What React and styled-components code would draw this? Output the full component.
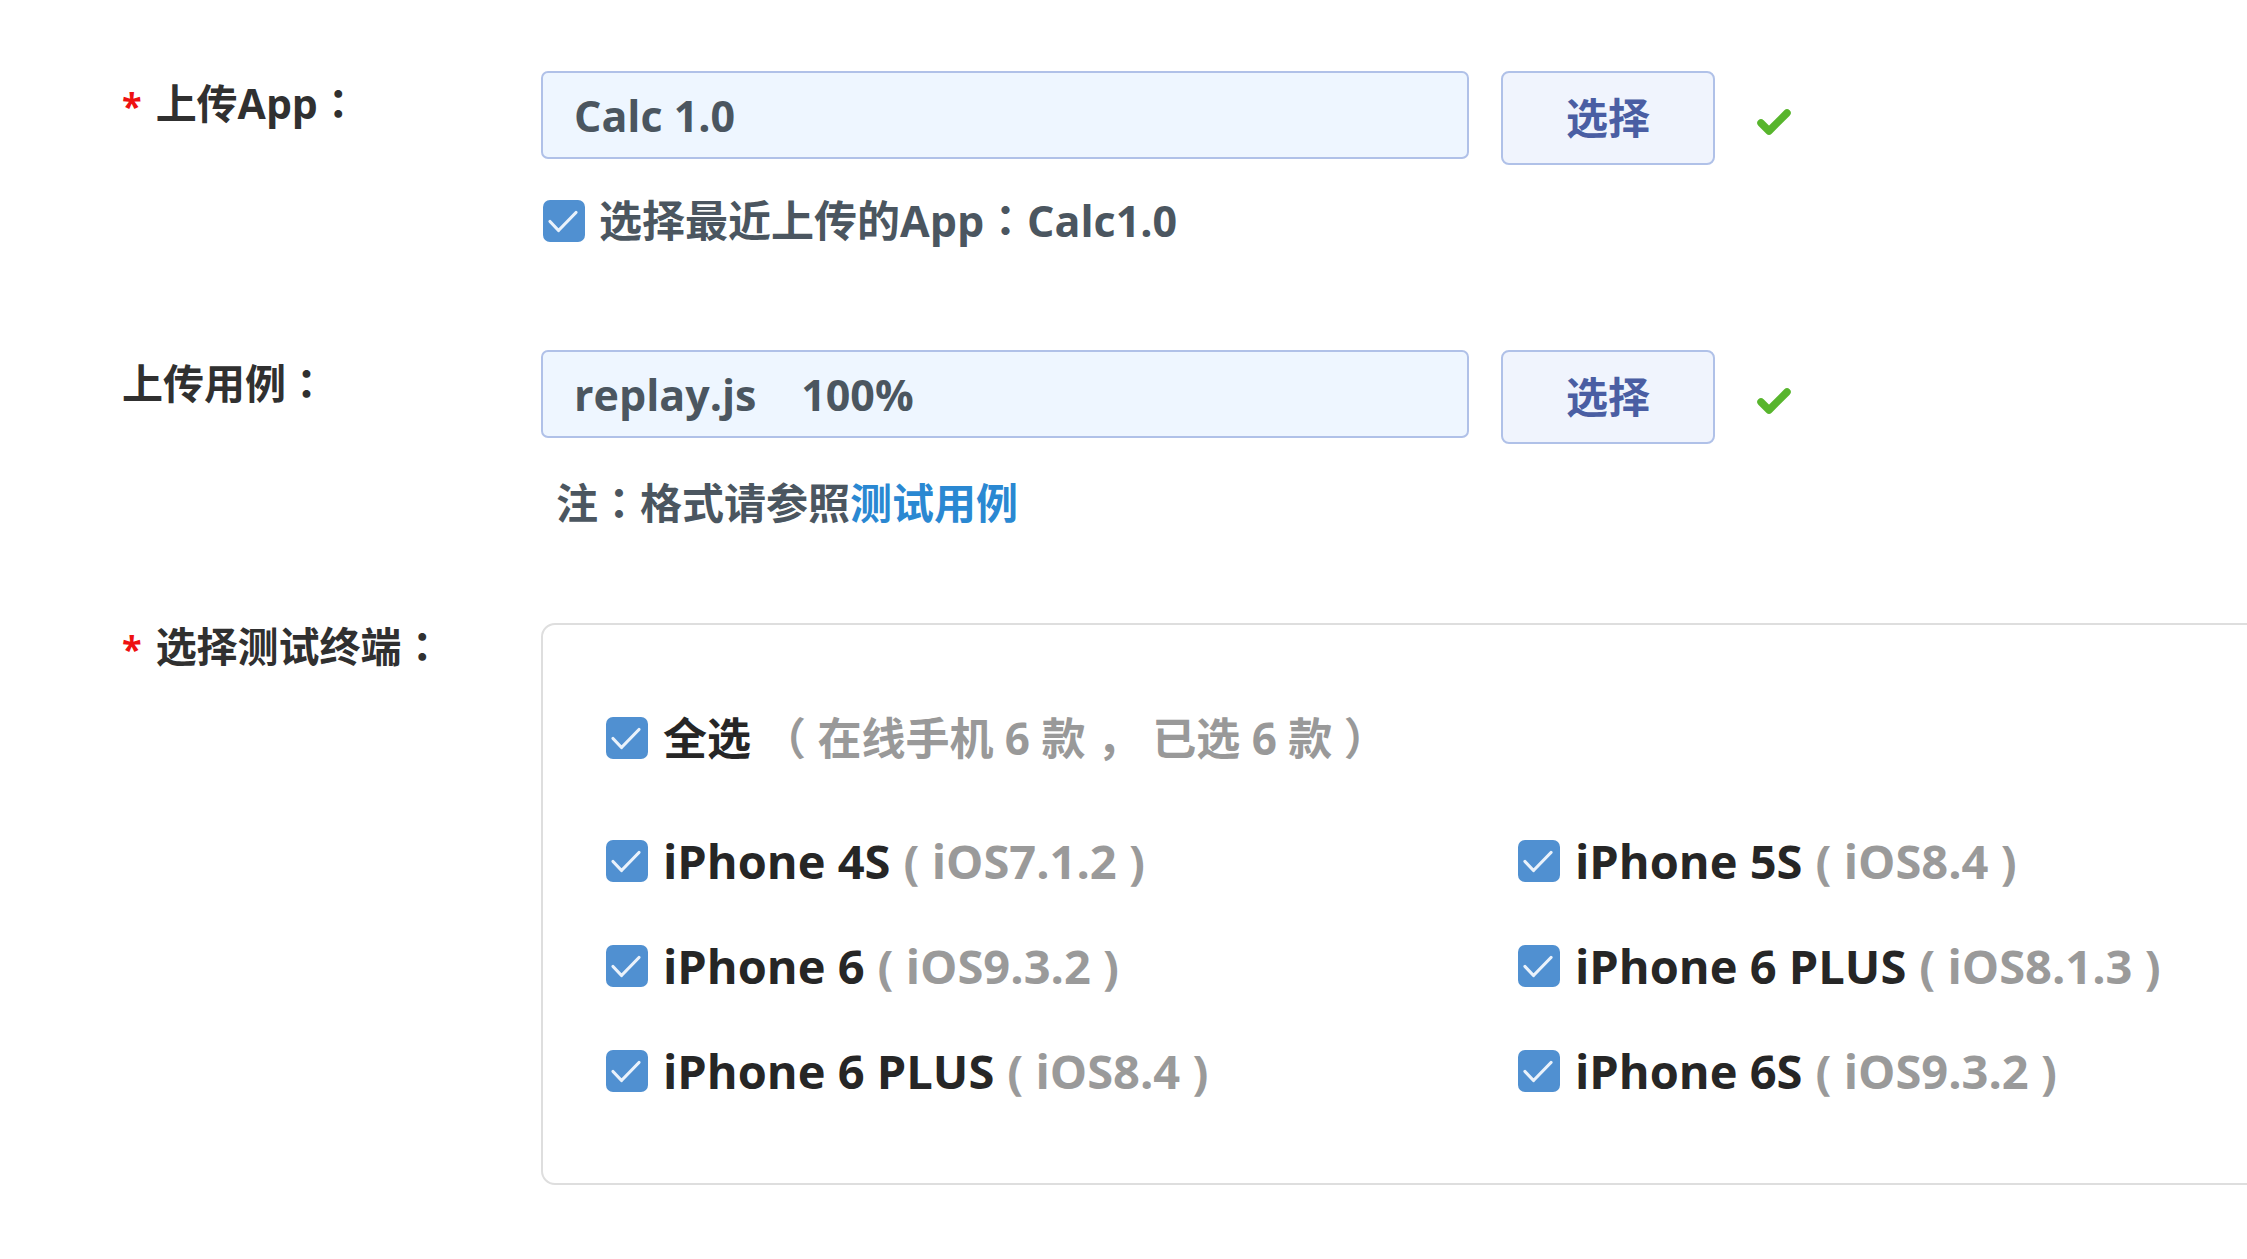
import React from "react";
import styled, { createGlobalStyle } from "styled-components";

const GlobalStyle = createGlobalStyle`
  html, body {
    margin: 0;
    padding: 0;
    background: #fff;
    overflow: hidden;
  }
  body {
    font-family: "Open Sans", "Noto Sans CJK SC", sans-serif;
    font-weight: 700;
  }
`;

const devices = [
  { name: "iPhone 4S", os: "iOS7.1.2" },
  { name: "iPhone 5S", os: "iOS8.4" },
  { name: "iPhone 6", os: "iOS9.3.2" },
  { name: "iPhone 6 PLUS", os: "iOS8.1.3" },
  { name: "iPhone 6 PLUS", os: "iOS8.4" },
  { name: "iPhone 6S", os: "iOS9.3.2" },
];

const CheckBox = () => (
  <Box>
    <svg width="42" height="42" viewBox="0 0 42 42">
      <polyline
        points="7,21.5 15.5,30.5 33,12.5"
        fill="none"
        stroke="#eaf2fb"
        strokeWidth="3.2"
        strokeLinecap="round"
        strokeLinejoin="round"
      />
    </svg>
  </Box>
);

const OkMark = () => (
  <Ok width="36" height="32" viewBox="0 0 36 32">
    <polyline
      points="5,17 13,25 31,7"
      fill="none"
      stroke="#58b52d"
      strokeWidth="7.5"
      strokeLinecap="round"
      strokeLinejoin="round"
    />
  </Ok>
);

const App = () => {
  return (
    <>
      <GlobalStyle />
      <Page>
        <Row>
          <Label $top={9}>
            <Star>*</Star>上传App<Colon>：</Colon>
          </Label>
          <Content>
            <InputLine>
              <Field>Calc 1.0</Field>
              <Button>选择</Button>
              <OkMark />
            </InputLine>
            <Recent>
              <CheckBox />
              <span>
                选择最近上传的App<Colon>：</Colon>Calc1.0
              </span>
            </Recent>
          </Content>
        </Row>

        <Row $gap={99}>
          <Label $top={10}>
            上传用例<Colon>：</Colon>
          </Label>
          <Content>
            <InputLine>
              <Field>replay.js&nbsp;&nbsp;&nbsp;&nbsp;100%</Field>
              <Button>选择</Button>
              <OkMark />
            </InputLine>
            <Note>
              注<Colon>：</Colon>格式请参照<Link>测试用例</Link>
            </Note>
          </Content>
        </Row>

        <Row $gap={90}>
          <Label $top={0}>
            <Star>*</Star>选择测试终端<Colon>：</Colon>
          </Label>
          <Content>
            <Panel>
              <AllLine>
                <CheckBox />
                <Name>全选</Name>
                <Count>（ 在线手机 6 款 ， 已选 6 款 ）</Count>
              </AllLine>
              <DeviceGrid>
                {devices.map((d, i) => (
                  <Device key={i}>
                    <CheckBox />
                    <Name>{d.name}</Name>
                    <Os>( {d.os} )</Os>
                  </Device>
                ))}
              </DeviceGrid>
            </Panel>
          </Content>
        </Row>
      </Page>
    </>
  );
};

export default App;

const Page = styled.div`
  width: 2247px;
  height: 1259px;
  padding: 71px 0 0 122px;
  box-sizing: border-box;
`;

const Row = styled.div`
  display: grid;
  grid-template-columns: 419px 1fr;
  margin-top: ${(p) => p.$gap || 0}px;
`;

const Label = styled.div`
  margin-top: ${(p) => p.$top}px;
  height: 46px;
  font-size: 41px;
  line-height: 46px;
  color: #303030;
  white-space: nowrap;
`;

const Colon = styled.span`
  font-family: "Noto Sans CJK TC", sans-serif;
  line-height: 0;
`;

const Star = styled.span`
  color: #ee1111;
  font-size: 36px;
  line-height: 0;
  margin-right: 14px;
`;

const Content = styled.div`
  display: flex;
  flex-direction: column;
`;

const InputLine = styled.div`
  display: flex;
  align-items: flex-start;
`;

const Field = styled.div`
  width: 928px;
  height: 88px;
  box-sizing: border-box;
  padding-left: 31px;
  display: flex;
  align-items: center;
  background: #eef6ff;
  border: 2px solid #b0c1e8;
  border-radius: 7px;
  font-size: 43px;
  color: #4b5660;
`;

const Button = styled.div`
  width: 214px;
  height: 94px;
  margin-left: 32px;
  padding-bottom: 6px;
  box-sizing: border-box;
  display: flex;
  align-items: center;
  justify-content: center;
  background: #f0f4fd;
  border: 2px solid #b0c1e8;
  border-radius: 8px;
  font-size: 42px;
  color: #4a5ea3;
`;

const Ok = styled.svg`
  margin: 35px 0 0 41px;
`;

const Recent = styled.div`
  display: flex;
  align-items: center;
  gap: 14px;
  height: 60px;
  margin-top: 26px;
  padding-left: 2px;
  font-size: 43px;
  line-height: 60px;
  color: #4b5660;
`;

const Note = styled.div`
  height: 60px;
  margin-top: 29px;
  padding-left: 15px;
  font-size: 42px;
  line-height: 60px;
  color: #4b5660;
`;

const Link = styled.span`
  color: #2a88d2;
`;

const Panel = styled.div`
  width: 1900px;
  height: 562px;
  box-sizing: border-box;
  border: 2px solid #dedede;
  border-radius: 14px;
  padding: 83px 0 0 63px;
`;

const Box = styled.span`
  flex: none;
  width: 42px;
  height: 42px;
  border-radius: 7px;
  background: #5090d1;
  display: inline-flex;

  svg {
    display: block;
  }
`;

const AllLine = styled.div`
  display: flex;
  align-items: center;
  gap: 15px;
  font-size: 44px;
  line-height: 60px;
`;

const Name = styled.span`
  color: #262626;
`;

const Count = styled.span`
  color: #999;
  margin-left: -4px;
`;

const DeviceGrid = styled.div`
  display: grid;
  grid-template-columns: 912px 1fr;
  row-gap: 45px;
  margin-top: 63px;
`;

const Device = styled.div`
  display: flex;
  align-items: center;
  gap: 15px;
  font-size: 47px;
  line-height: 60px;
`;

const Os = styled.span`
  color: #9a9a9a;
  margin-left: -2px;
`;
